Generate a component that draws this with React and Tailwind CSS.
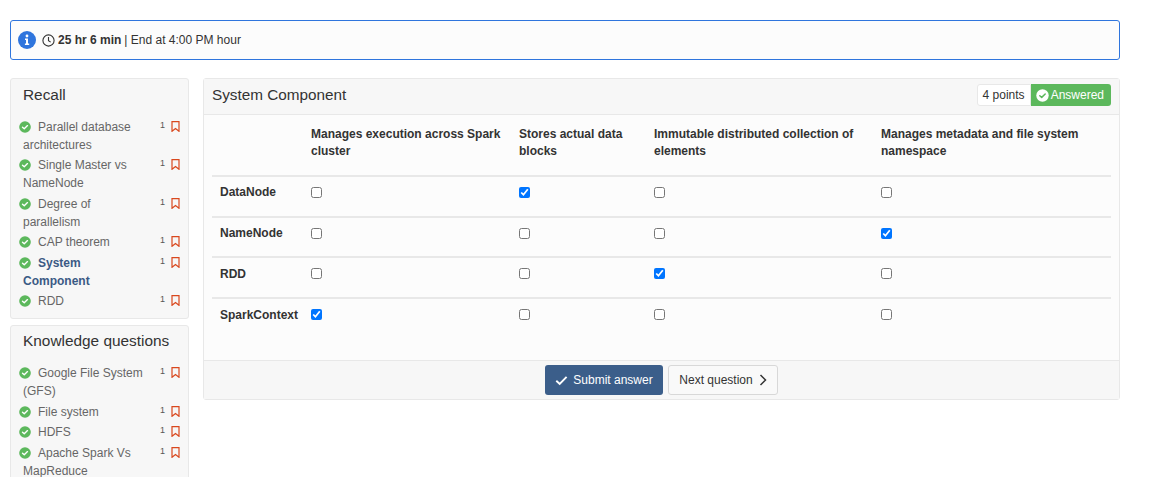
import React from "react";

const Check = ({ size = 12 }) => (
  <svg width={size} height={size} viewBox="0 0 13 13" className="inline-block align-[-2px] shrink-0">
    <circle cx="6.5" cy="6.5" r="6.3" fill="#5cb85c" />
    <path d="M3.8 6.7 5.7 8.4 9.2 5" fill="none" stroke="#fff" strokeWidth="1.5" strokeLinecap="round" strokeLinejoin="round" />
  </svg>
);

const Bookmark = () => (
  <svg width="9" height="11" viewBox="0 0 9 11" className="block shrink-0">
    <path d="M1 .6h7v9.7L4.5 7.6 1 10.3z" fill="none" stroke="#d9481e" strokeWidth="1.2" />
  </svg>
);

const Item = ({ text, active }) => (
  <div className="flex items-start mb-[2.4px]">
    <div className={`w-[138px] pl-[12px] leading-[18px] text-[12px] ${active ? "font-bold text-[#3b5a85]" : "text-[#666]"}`}>
      <span className="-ml-[4px] mr-[7px]"><Check /></span>
      {text}
    </div>
    <div className="flex items-start ml-[11px]">
      <span className="text-[9px] leading-[12px] text-[#555] w-[11px] mt-[1px]">1</span>
      <span className="mt-[3px]"><Bookmark /></span>
    </div>
  </div>
);

const SideCard = ({ title, items, className = "", titleGap = "mb-[13px]", pad = "pt-[6px]" }) => (
  <div className={`w-[179px] bg-[#f7f7f7] border border-[#e8e8e8] rounded-[3px] pb-[6px] ${pad} ${className}`}>
    <div className={`pl-[12px] text-[15.4px] leading-[20px] text-[#333] ${titleGap}`}>{title}</div>
    <div>
      {items.map((it) => (
        <Item key={it.text} {...it} />
      ))}
    </div>
  </div>
);

const rows = [
  { name: "DataNode", c: 1, h: "h-[41px]", nameTop: "" },
  { name: "NameNode", c: 3, h: "h-[40px]", nameTop: "" },
  { name: "RDD", c: 2, h: "h-[41px]", nameTop: "pt-[1px]" },
  { name: "SparkContext", c: 0, h: "h-[61px]", nameTop: "pt-[1px]" },
];
const heads = [
  "Manages execution across Spark cluster",
  "Stores actual data blocks",
  "Immutable distributed collection of elements",
  "Manages metadata and file system namespace",
];
const gridCols = "grid grid-cols-[91px_208px_135px_227px_238px]";

export default function App() {
  return (
    <div className="h-[477px] overflow-hidden bg-white pt-[20px] pl-[10px] font-['Liberation_Sans',Arial,sans-serif] text-[#333]">
      <div className="w-[1110px] h-[40px] border border-[#2f75dd] rounded-[3px] bg-[#fcfcfc] flex items-center pl-[7px] text-[12px]">
        <svg width="18" height="18" viewBox="0 0 18 18" className="shrink-0">
          <circle cx="9" cy="9" r="9" fill="#2f75dd" />
          <circle cx="9" cy="5" r="1.4" fill="#fff" />
          <path d="M7 7.6h3v5h1.2v1.5H6.9v-1.5H8V9.1H7z" fill="#fff" />
        </svg>
        <svg width="13" height="13" viewBox="0 0 13 13" className="ml-[6px] shrink-0">
          <circle cx="6.5" cy="6.5" r="5.6" fill="none" stroke="#333" strokeWidth="1.1" />
          <path d="M6.5 3v3.7l2.2 1.4" fill="none" stroke="#333" strokeWidth="1.1" />
        </svg>
        <span className="ml-[3px] font-bold">25 hr 6 min</span>
        <span className="ml-[3px]">| End at 4:00 PM hour</span>
      </div>

      <div className="flex items-start mt-[18px]">
        <div className="w-[179px] shrink-0">
          <SideCard
            title="Recall"
            items={[
              { text: "Parallel database architectures" },
              { text: "Single Master vs NameNode" },
              { text: "Degree of parallelism" },
              { text: "CAP theorem" },
              { text: "System Component", active: true },
              { text: "RDD" },
            ]}
          />
          <SideCard
            className="mt-[6px]"
            pad="pt-[5px]"
            titleGap="mb-[13px]"
            title="Knowledge questions"
            items={[
              { text: "Google File System (GFS)" },
              { text: "File system" },
              { text: "HDFS" },
              { text: "Apache Spark Vs MapReduce" },
            ]}
          />
        </div>

        <div className="ml-[14px] w-[917px] border border-[#e8e8e8] rounded-[3px] bg-[#fcfcfc]">
          <div className="h-[36px] bg-[#f7f7f7] border-b border-[#e8e8e8] flex items-center justify-between pl-[8px] pr-[8px] pb-[3px]">
            <span className="text-[15.3px] text-[#333]">System Component</span>
            <div className="flex items-center text-[12px] h-[22px]">
              <span className="h-full flex items-center pl-[5px] pr-[5px] bg-white border border-[#e8e8e8] rounded-l-[3px] text-[#333]">4 points</span>
              <span className="h-full flex items-center gap-[2px] pl-[5px] pr-[7px] bg-[#5cb85c] rounded-r-[3px] text-white">
                <svg width="13" height="13" viewBox="0 0 13 13" className="shrink-0">
                  <circle cx="6.5" cy="6.5" r="6.2" fill="#fff" />
                  <path d="M3.8 6.7 5.7 8.4 9.2 5" fill="none" stroke="#5cb85c" strokeWidth="1.5" strokeLinecap="round" strokeLinejoin="round" />
                </svg>
                Answered
              </span>
            </div>
          </div>

          <div className="px-[8px]">
            <div className={`${gridCols} h-[62px] border-b-2 border-[#e8e8e8] pt-[11px] text-[12px] leading-[17px] font-bold`}>
              <div />
              {heads.map((h) => (
                <div key={h} className="px-[8px]">{h}</div>
              ))}
            </div>
            {rows.map((r, i) => (
              <div key={r.name} className={`${gridCols} ${r.h} ${i < 3 ? "border-b-2 border-[#e8e8e8]" : ""} pt-[8px] text-[12px] font-bold`}>
                <div className={`pl-[8px] leading-[15px] ${r.nameTop}`}>{r.name}</div>
                {[0, 1, 2, 3].map((c) => (
                  <div key={c} className="px-[8px] pt-[2px]">
                    <input type="checkbox" defaultChecked={c === r.c} className="block m-0 w-[11px] h-[11px]" />
                  </div>
                ))}
              </div>
            ))}
          </div>

          <div className="h-[39px] bg-[#f7f7f7] border-t border-[#e8e8e8] flex items-center justify-center gap-[5px] text-[12px]">
            <button className="h-[30px] w-[118px] rounded-[3px] bg-[#3b5e8a] text-white flex items-center justify-center gap-[5px]">
              <svg width="13" height="11" viewBox="0 0 13 11">
                <path d="M1.3 5.8 4.7 9 11.6 1.8" fill="none" stroke="#fff" strokeWidth="1.9" />
              </svg>
              Submit answer
            </button>
            <button className="h-[30px] w-[110px] rounded-[3px] bg-[#f9f9f9] border border-[#d8d8d8] text-[#333] flex items-center justify-center gap-[6px]">
              Next question
              <svg width="8" height="12" viewBox="0 0 8 12">
                <path d="M1.5 1 6.5 6 1.5 11" fill="none" stroke="#333" strokeWidth="1.5" />
              </svg>
            </button>
          </div>
        </div>
      </div>
    </div>
  );
}
